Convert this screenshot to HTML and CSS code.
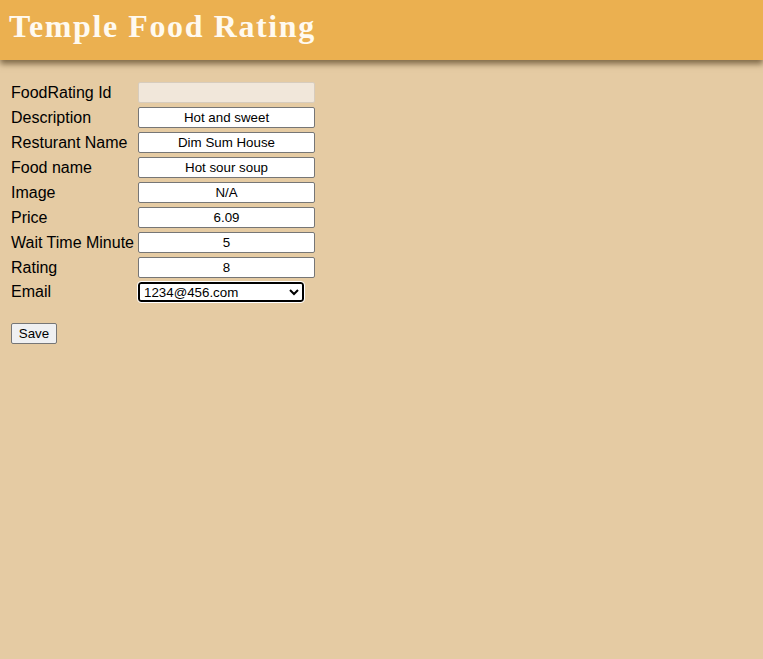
FILE: index.html
```html
<!DOCTYPE html>
<html>
<head>
<meta charset="utf-8">
<title>Temple Food Rating</title>
<link rel="stylesheet" href="styles.css">
</head>
<body>
<header class="banner"><h1 class="title">Temple Food Rating</h1></header>
<main class="content">
<table class="form-table">
<tr><td class="label">FoodRating Id</td><td><input class="field" type="text" disabled></td></tr>
<tr><td class="label">Description</td><td><input class="field" type="text" value="Hot and sweet"></td></tr>
<tr><td class="label">Resturant Name</td><td><input class="field" type="text" value="Dim Sum House"></td></tr>
<tr><td class="label">Food name</td><td><input class="field" type="text" value="Hot sour soup"></td></tr>
<tr><td class="label">Image</td><td><input class="field" type="text" value="N/A"></td></tr>
<tr><td class="label">Price</td><td><input class="field" type="text" value="6.09"></td></tr>
<tr><td class="label">Wait Time Minute</td><td><input class="field" type="text" value="5"></td></tr>
<tr><td class="label">Rating</td><td><input class="field" type="text" value="8"></td></tr>
<tr><td class="label">Email</td><td><select class="picker"><option>1234@456.com</option></select></td></tr>
</table>
<div class="actions"><button class="save" type="button">Save</button></div>
</main>
</body>
</html>
```
FILE: styles.css
```css
html, body { margin: 0; padding: 0; }
body {
  background: #e5cba3;
  font-family: "Liberation Sans", Arial, sans-serif;
  color: #000;
  min-height: 659px;
}
.banner {
  background: #ebb050;
  height: 60px;
  box-shadow: 0 4px 6px rgba(60, 40, 10, 0.6);
  display: flex;
  align-items: center;
  padding-left: 9px;
}
.title {
  margin: 0;
  color: #fffaf0;
  font-family: "Liberation Serif", "Times New Roman", serif;
  font-weight: bold;
  font-size: 32px;
  letter-spacing: 1.6px;
  position: relative;
  top: -4px;
}
.content { padding: 19px 8px 0 8px; }
.form-table { border-spacing: 2px; }
.form-table td { padding: 1px; }
.label { font-size: 16px; padding-right: 1px; }
.field {
  box-sizing: border-box;
  width: 177px;
  height: 21px;
  margin: 0;
  font-family: "Liberation Sans", Arial, sans-serif;
  font-size: 13.33px;
  text-align: center;
  border: 1px solid #767676;
  border-radius: 2px;
  background: #fff;
  padding: 1px 2px;
}
.field:disabled { background: #f1e7da; border-color: #d7ccbd; }
.picker {
  box-sizing: border-box;
  width: 166px;
  height: 20px;
  margin: 0;
  font-family: "Liberation Sans", Arial, sans-serif;
  font-size: 13.33px;
  border: 2px solid #000;
  border-radius: 3px;
  background: #fff;
  outline: 1px solid #fff;
}
.actions { padding: 18px 3px 0 3px; }
.save {
  box-sizing: border-box;
  width: 46px;
  font-family: "Liberation Sans", Arial, sans-serif;
  font-size: 13.33px;
  height: 21px;
  padding: 1px 6px;
  border: 1px solid #767676;
  border-radius: 2px;
  background: #eff0f2;
}
```
